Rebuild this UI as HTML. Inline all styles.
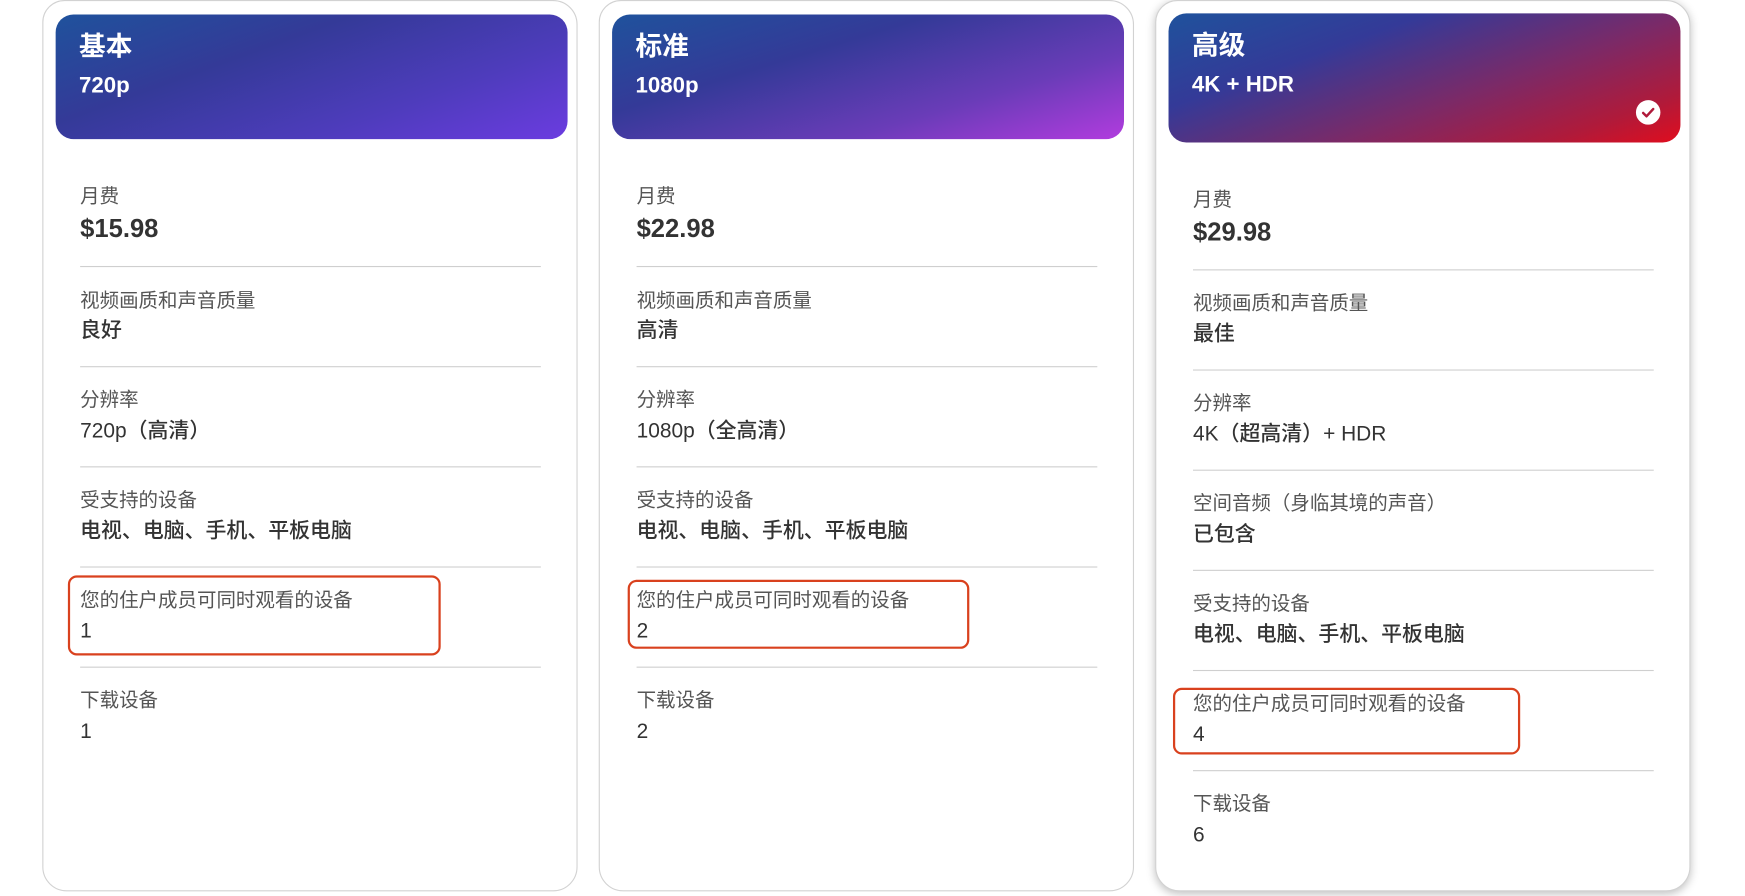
<!DOCTYPE html>
<html><head><meta charset="utf-8"><style>
html,body{margin:0;padding:0;background:#fff;width:1745px;height:896px;overflow:hidden}
#w{position:absolute;left:0;top:0;width:1568px;height:805px;transform:scale(1.11288);transform-origin:0 0;font-family:"Liberation Sans","Noto Sans CJK SC",sans-serif}
.card{position:absolute;top:0;width:481px;height:801px;border:1px solid #d2d2d2;border-radius:22px;border-top-left-radius:20px;background:#fff;box-sizing:border-box}
.hd{position:absolute;left:11px;width:460px;border-radius:16px;color:#fff}
.hd .t{position:absolute;left:21px;top:15px;font-size:24px;font-weight:bold;line-height:30px}
.hd .s{position:absolute;left:21px;top:52px;font-size:20px;font-weight:bold;line-height:24px}
.l{position:absolute;left:33px;font-size:17.5px;color:#555;line-height:20px;white-space:nowrap}
.v{position:absolute;left:33px;font-size:18.8px;color:#333;line-height:22px;font-weight:500;white-space:nowrap}
.p{font-size:23px;font-weight:bold;color:#333}
.d{position:absolute;left:33px;width:414px;height:1px;background:#cfcfcf}
.r{position:absolute;border:2px solid #d9411e;border-radius:8px;box-sizing:border-box}
</style></head><body><div id="w">

<div class="card" style="left:38px">
 <div class="hd" style="top:12px;height:112px;background:linear-gradient(160deg,#1f529c 0%,#343a98 35%,#4e3cbc 70%,#6b3ce0 100%)"><div class="t">基本</div><div class="s">720p</div></div>
 <div class="l" style="top:165px">月费</div><div class="v p" style="top:193px">$15.98</div><div class="d" style="top:238px"></div>
 <div class="l" style="top:259px">视频画质和声音质量</div><div class="v" style="top:285px">良好</div><div class="d" style="top:328px"></div>
 <div class="l" style="top:348px">分辨率</div><div class="v" style="top:375px">720p（高清）</div><div class="d" style="top:418px"></div>
 <div class="l" style="top:438px">受支持的设备</div><div class="v" style="top:465px">电视、电脑、手机、平板电脑</div><div class="d" style="top:508px"></div>
 <div class="l" style="top:528px">您的住户成员可同时观看的设备</div><div class="v" style="top:555px">1</div><div class="d" style="top:598px"></div>
 <div class="l" style="top:618px">下载设备</div><div class="v" style="top:645px">1</div>
 <div class="r" style="left:22px;top:516px;width:335px;height:72px"></div>
</div>

<div class="card" style="left:538px">
 <div class="hd" style="top:12px;height:112px;background:linear-gradient(163deg,#1f529c 0%,#343a98 35%,#6a3cb8 70%,#b13cde 100%)"><div class="t">标准</div><div class="s">1080p</div></div>
 <div class="l" style="top:165px">月费</div><div class="v p" style="top:193px">$22.98</div><div class="d" style="top:238px"></div>
 <div class="l" style="top:259px">视频画质和声音质量</div><div class="v" style="top:285px">高清</div><div class="d" style="top:328px"></div>
 <div class="l" style="top:348px">分辨率</div><div class="v" style="top:375px">1080p（全高清）</div><div class="d" style="top:418px"></div>
 <div class="l" style="top:438px">受支持的设备</div><div class="v" style="top:465px">电视、电脑、手机、平板电脑</div><div class="d" style="top:508px"></div>
 <div class="l" style="top:528px">您的住户成员可同时观看的设备</div><div class="v" style="top:555px">2</div><div class="d" style="top:598px"></div>
 <div class="l" style="top:618px">下载设备</div><div class="v" style="top:645px">2</div>
 <div class="r" style="left:25px;top:520px;width:307px;height:62px"></div>
</div>

<div class="card" style="left:1038px;box-shadow:0 2px 8px rgba(0,0,0,.25)">
 <div class="hd" style="top:11px;height:116px;background:linear-gradient(160deg,#1f529c 0%,#343a98 30%,#7a2a68 60%,#b01a3a 85%,#e00d1e 100%)"><div class="t">高级</div><div class="s">4K + HDR</div>
  <div style="position:absolute;left:420px;top:78px;width:22px;height:22px;border-radius:50%;background:#fff"><svg width="22" height="22" viewBox="0 0 22 22"><path d="M6.5 11.5l3 3 6-6.5" fill="none" stroke="#b01a3a" stroke-width="2.2" stroke-linecap="round" stroke-linejoin="round"/></svg></div></div>
 <div class="l" style="top:168px">月费</div><div class="v p" style="top:196px">$29.98</div><div class="d" style="top:241px"></div>
 <div class="l" style="top:261px">视频画质和声音质量</div><div class="v" style="top:288px">最佳</div><div class="d" style="top:331px"></div>
 <div class="l" style="top:351px">分辨率</div><div class="v" style="top:378px">4K（超高清）+ HDR</div><div class="d" style="top:421px"></div>
 <div class="l" style="top:441px">空间音频（身临其境的声音）</div><div class="v" style="top:468px">已包含</div><div class="d" style="top:511px"></div>
 <div class="l" style="top:531px">受支持的设备</div><div class="v" style="top:558px">电视、电脑、手机、平板电脑</div><div class="d" style="top:601px"></div>
 <div class="l" style="top:621px">您的住户成员可同时观看的设备</div><div class="v" style="top:648px">4</div><div class="d" style="top:691px"></div>
 <div class="l" style="top:711px">下载设备</div><div class="v" style="top:738px">6</div>
 <div class="r" style="left:15px;top:617px;width:312px;height:60px"></div>
</div>

</div></body></html>
